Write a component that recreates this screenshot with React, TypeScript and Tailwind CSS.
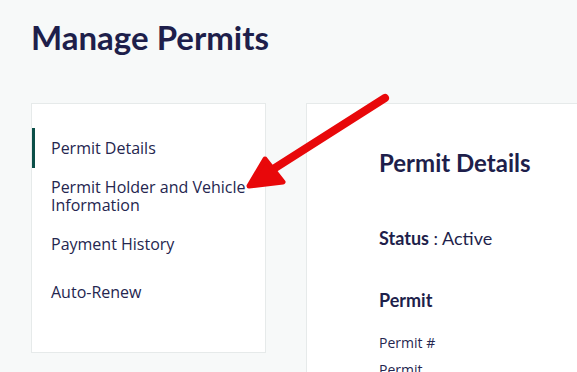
import React from "react";

export default function App() {
  const navy = "text-[#1e1f4b]";
  return (
    <div className="relative w-[577px] h-[372px] overflow-hidden bg-[#f7f9f9]">
      <div className="pl-[31px] pt-[17px]">
        <h1 className={`font-['Lato',sans-serif] font-bold text-[33px] leading-[41px] ${navy}`}>Manage Permits</h1>
        <div className="flex gap-[40px] mt-[45px]">
          <div className="w-[235px] h-[250px] shrink-0 bg-white border border-[#e6eaea] pt-[24px] font-['Open_Sans',sans-serif] text-[16px] leading-[18px] text-[#25264f]">
            <div className="border-l-[3px] border-[#0b4f48] pl-[16px] py-[11px]">Permit Details</div>
            <div className="pl-[19px] pr-[16px] py-[10px]">Permit Holder and Vehicle Information</div>
            <div className="pl-[19px] py-[11px]">Payment History</div>
            <div className="pl-[19px] py-[11px] mt-[8px]">Auto-Renew</div>
          </div>
          <div className="flex-1 h-[300px] bg-white border border-[#e6eaea] border-r-0 pl-[72px] pt-[44px]">
            <h2 className={`font-['Lato',sans-serif] font-bold text-[24px] leading-[30px] ${navy}`}>Permit Details</h2>
            <div className={`mt-[49px] font-['Lato',sans-serif] text-[18px] leading-[22px] ${navy}`}>
              <span className="font-bold">Status</span> : Active
            </div>
            <h3 className={`mt-[40px] font-['Lato',sans-serif] font-bold text-[18px] leading-[22px] ${navy}`}>Permit</h3>
            <div className="mt-[21px] font-['Open_Sans',sans-serif] text-[14px] leading-[22px] text-[#25264f]">Permit #</div>
            <div className="mt-[5px] font-['Open_Sans',sans-serif] text-[14px] leading-[22px] text-[#25264f]">Permit</div>
          </div>
        </div>
      </div>
      <svg className="absolute left-0 top-0 pointer-events-none" width="577" height="372" viewBox="0 0 577 372">
        <g stroke="#e8080a" strokeWidth="8" strokeLinecap="round" strokeLinejoin="round" fill="#e8080a">
          <line x1="385" y1="98" x2="256" y2="180" />
          <polygon points="249,186 265,159 283,182" strokeWidth="5" />
        </g>
      </svg>
    </div>
  );
}
